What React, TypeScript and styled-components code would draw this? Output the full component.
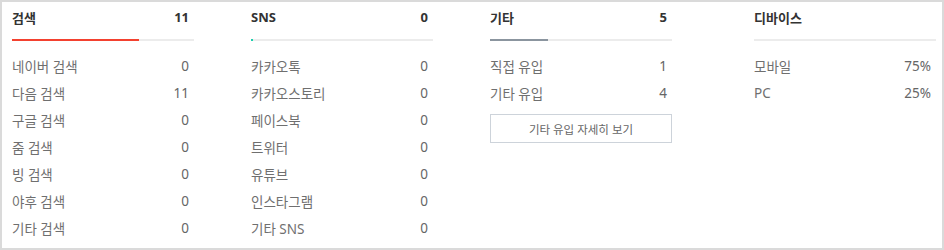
import React from "react";
import styled, { createGlobalStyle } from "styled-components";

const Global = createGlobalStyle`
  html, body { margin: 0; padding: 0; background: #fff; }
  body { font-family: "Noto Sans", "Noto Sans CJK KR", sans-serif; }
  * { box-sizing: border-box; }
`;

const Panel = styled.div`
  width: 944px;
  height: 250px;
  border: 2px solid #dadada;
  background: #fff;
  display: flex;
  padding: 5px 0 0 10px;
`;

const Column = styled.section<{ $offset?: number }>`
  width: 182px;
  margin-left: ${(p) => p.$offset ?? 0}px;
  display: flex;
  flex-direction: column;
`;

const Header = styled.div`
  display: flex;
  justify-content: space-between;
  align-items: center;
  height: 20px;
  padding-right: 5px;
  font-size: 13px;
  font-weight: 700;
  color: #333;
`;

const Track = styled.div`
  margin-top: 12px;
  height: 2px;
  background: #ececec;
  display: flex;
`;

const Fill = styled.div<{ $color: string }>`
  height: 2px;
  background: ${(p) => p.$color};
  min-width: 2px;
`;

const List = styled.ul`
  list-style: none;
  margin: 11px 0 0;
  padding: 0;
`;

const Row = styled.li`
  display: flex;
  justify-content: space-between;
  align-items: center;
  height: 27px;
  padding-right: 5px;
  font-size: 13.5px;
  color: #6f6f6f;
`;

const Value = styled.span`
  color: #666;
`;

const DetailButton = styled.button`
  margin-top: 8px;
  height: 29px;
  width: 182px;
  border: 1px solid #cdd3da;
  background: #fff;
  font-family: inherit;
  font-size: 11.5px;
  color: #666;
  cursor: pointer;
`;

type Item = [string, string];

type Group = {
  title: string;
  total?: string;
  ratio?: number;
  color?: string;
  offset: number;
  items: Item[];
  button?: string;
};

const groups: Group[] = [
  {
    title: "검색",
    total: "11",
    ratio: 0.7,
    color: "#f3412f",
    offset: 0,
    items: [
      ["네이버 검색", "0"],
      ["다음 검색", "11"],
      ["구글 검색", "0"],
      ["줌 검색", "0"],
      ["빙 검색", "0"],
      ["야후 검색", "0"],
      ["기타 검색", "0"],
    ],
  },
  {
    title: "SNS",
    total: "0",
    ratio: 0,
    color: "#1ccfae",
    offset: 57,
    items: [
      ["카카오톡", "0"],
      ["카카오스토리", "0"],
      ["페이스북", "0"],
      ["트위터", "0"],
      ["유튜브", "0"],
      ["인스타그램", "0"],
      ["기타 SNS", "0"],
    ],
  },
  {
    title: "기타",
    total: "5",
    ratio: 0.32,
    color: "#8b959f",
    offset: 57,
    items: [
      ["직접 유입", "1"],
      ["기타 유입", "4"],
    ],
    button: "기타 유입 자세히 보기",
  },
  {
    title: "디바이스",
    offset: 82,
    items: [
      ["모바일", "75%"],
      ["PC", "25%"],
    ],
  },
];

export default function App() {
  return (
    <>
      <Global />
      <Panel>
        {groups.map((g) => (
          <Column key={g.title} $offset={g.offset}>
            <Header>
              <span>{g.title}</span>
              {g.total !== undefined && <span>{g.total}</span>}
            </Header>
            <Track>
              {g.color && (
                <Fill
                  $color={g.color}
                  style={{ width: `${(g.ratio ?? 0) * 100}%` }}
                />
              )}
            </Track>
            <List>
              {g.items.map(([label, value]) => (
                <Row key={label}>
                  <span>{label}</span>
                  <Value>{value}</Value>
                </Row>
              ))}
            </List>
            {g.button && <DetailButton>{g.button}</DetailButton>}
          </Column>
        ))}
      </Panel>
    </>
  );
}
